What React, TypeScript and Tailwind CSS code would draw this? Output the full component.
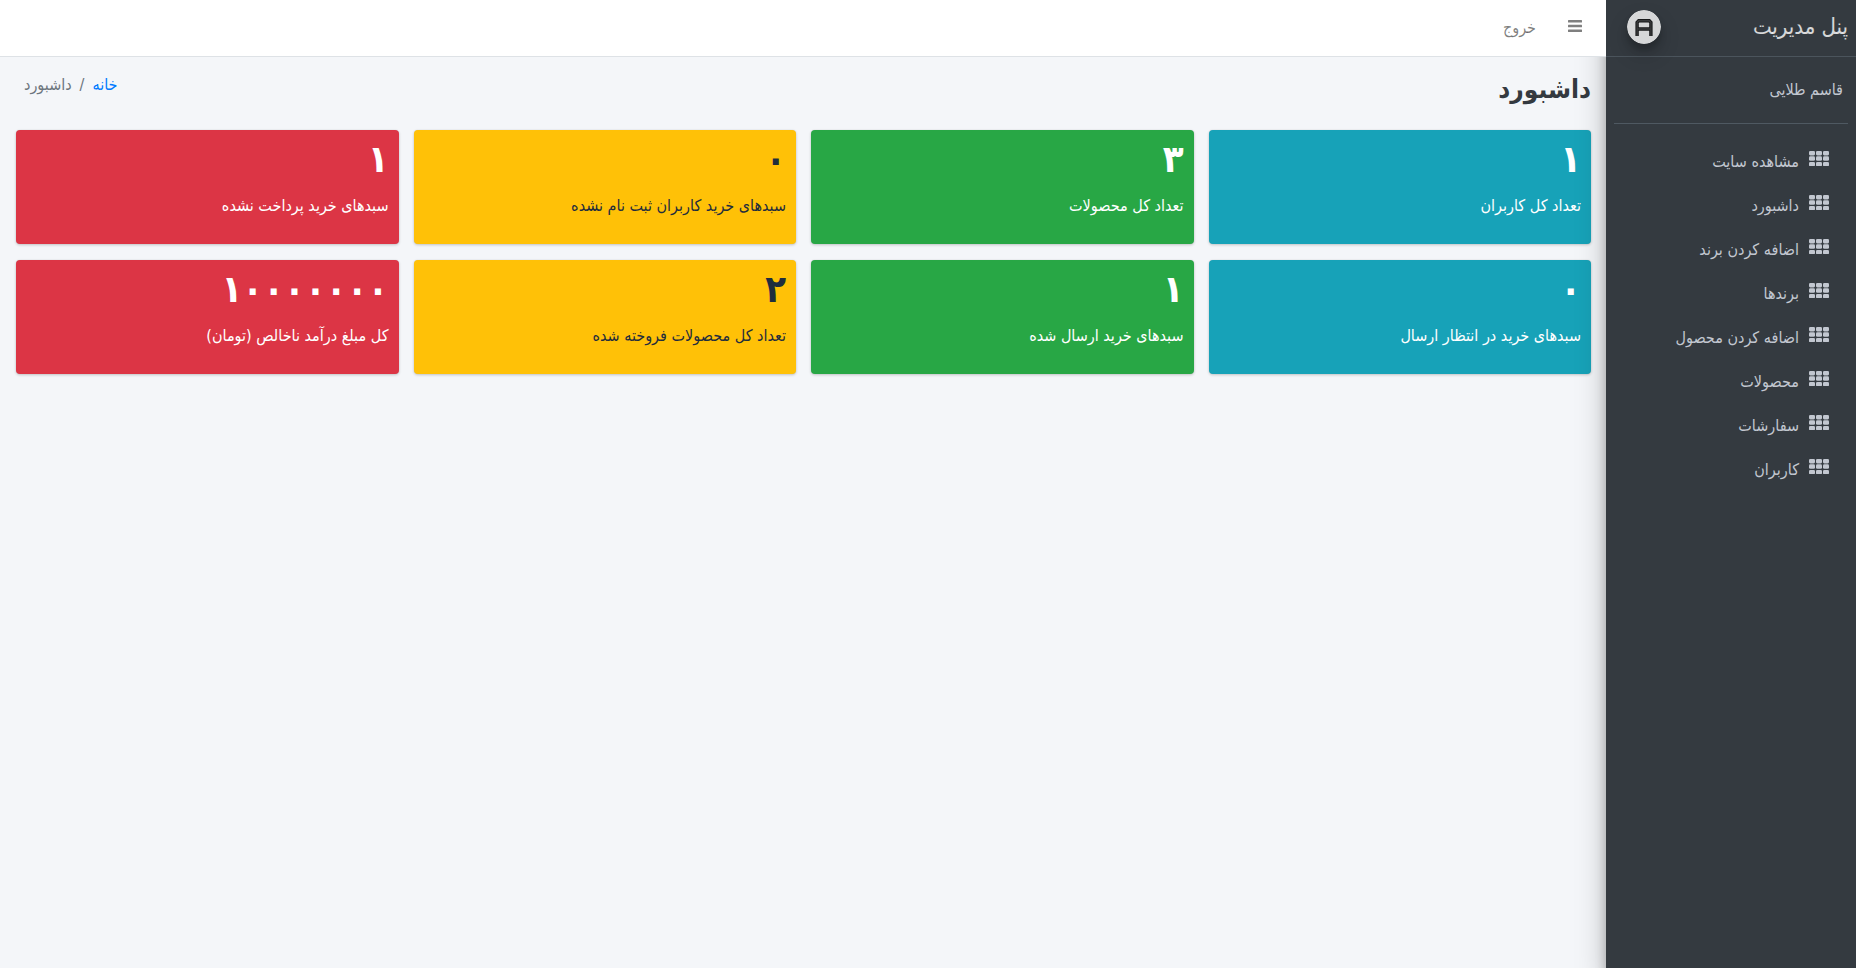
import React from 'react';

const navItems = [
  'مشاهده سایت',
  'داشبورد',
  'اضافه کردن برند',
  'برندها',
  'اضافه کردن محصول',
  'محصولات',
  'سفارشات',
  'کاربران',
];

const tones = {
  info: 'bg-[#17a2b8] text-white',
  success: 'bg-[#28a745] text-white',
  warning: 'bg-[#ffc107] text-[#1f2d3d]',
  danger: 'bg-[#dc3545] text-white',
};

type Stat = { value: string; label: string; tone: keyof typeof tones };

const stats: Stat[] = [
  { value: '۱', label: 'تعداد کل کاربران', tone: 'info' },
  { value: '۳', label: 'تعداد کل محصولات', tone: 'success' },
  { value: '۰', label: 'سبدهای خرید کاربران ثبت نام نشده', tone: 'warning' },
  { value: '۱', label: 'سبدهای خرید پرداخت نشده', tone: 'danger' },
  { value: '۰', label: 'سبدهای خرید در انتظار ارسال', tone: 'info' },
  { value: '۱', label: 'سبدهای خرید ارسال شده', tone: 'success' },
  { value: '۲', label: 'تعداد کل محصولات فروخته شده', tone: 'warning' },
  { value: '۱۰۰۰۰۰۰۰', label: 'کل مبلغ درآمد ناخالص (تومان)', tone: 'danger' },
];

function GridIcon() {
  const cols = [0, 7, 14];
  const rows = [0, 5.3, 10.9];
  return (
    <svg viewBox="0 0 20 15" className="h-[15px] w-5 shrink-0" fill="currentColor" aria-hidden="true">
      {rows.map((y) =>
        cols.map((x) => <rect key={`${x}-${y}`} x={x} y={y} width="6" height="4.4" rx="1.3" />),
      )}
    </svg>
  );
}

function BarsIcon() {
  return (
    <svg viewBox="0 0 14 12" className="h-3 w-3.5" fill="currentColor" aria-hidden="true">
      <rect x="0" y="0" width="14" height="2.5" rx="0.5" />
      <rect x="0" y="4.7" width="14" height="2.5" rx="0.5" />
      <rect x="0" y="9.4" width="14" height="2.5" rx="0.5" />
    </svg>
  );
}

function BrandLogo() {
  const mark = 'M10.1 26V12.4l1.6-1.6h10.6l1.6 1.6V26M10.1 19h13.8';
  return (
    <svg
      viewBox="0 0 34 34"
      className="size-[34px] rounded-full opacity-80 shadow-[0_10px_20px_rgba(0,0,0,0.19),0_6px_6px_rgba(0,0,0,0.23)]"
      aria-hidden="true"
    >
      <circle cx="17" cy="17" r="17" fill="#fff" />
      <path d={mark} fill="none" stroke="#111" strokeWidth="3.4" />
      <path d={mark} fill="none" stroke="#3a3a3a" strokeWidth="1.4" />
    </svg>
  );
}

function Sidebar() {
  return (
    <aside className="z-10 flex w-[250px] shrink-0 flex-col bg-[#343a40] text-[#c2c7d0] shadow-[0_14px_28px_rgba(0,0,0,0.25),0_10px_10px_rgba(0,0,0,0.22)]">
      <a href="#" className="flex h-[57px] items-center justify-between border-b border-[#4b545c] pr-2 pl-[21px] text-[22px] font-light text-white/80">
        <span className="pb-1">پنل مدیریت</span>
        <span className="pb-0.5">
          <BrandLogo />
        </span>
      </a>
      <div className="mx-2 flex h-[67px] items-center border-b border-[#4f5962] px-[5px]">
        <a href="#" className="text-base">قاسم طلایی</a>
      </div>
      <nav className="mt-4 px-2">
        <ul>
          {navItems.map((item) => (
            <li key={item}>
              <a href="#" className="flex h-11 items-center gap-2.5 pr-[19px] text-base">
                <span className="pb-2">
                  <GridIcon />
                </span>
                <span>{item}</span>
              </a>
            </li>
          ))}
        </ul>
      </nav>
    </aside>
  );
}

function StatCard({ value, label, tone }: Stat) {
  return (
    <section className={`h-[114px] rounded-sm px-2.5 pt-2 shadow-[0_0_1px_rgba(0,0,0,0.125),0_1px_3px_rgba(0,0,0,0.2)] ${tones[tone]}`}>
      <h3 className="mb-3.5 text-[38px] leading-[42px] font-bold whitespace-nowrap">{value}</h3>
      <p className="text-base leading-6">{label}</p>
    </section>
  );
}

export default function App() {
  return (
    <div
      dir="rtl"
      className="flex min-h-screen bg-[#f4f6f9] font-['DejaVu_Sans_Condensed','DejaVu_Sans',sans-serif] text-[#212529]"
    >
      <Sidebar />
      <div className="min-w-0 flex-1">
        <header className="relative z-20 flex h-[57px] items-center gap-8 border-b border-[#dee2e6] bg-white pr-6 text-black/50">
          <button type="button" aria-label="منو" className="pb-1">
            <BarsIcon />
          </button>
          <a href="#" className="text-base">خروج</a>
        </header>
        <main className="pr-[15px] pl-4">
          <div className="flex h-[73px] items-start justify-between">
            <h1 className="pt-3 text-[26px] leading-10 font-bold text-[#343a40]">داشبورد</h1>
            <nav className="flex gap-2 pt-4 pl-2 text-base leading-6 text-[#6c757d]">
              <a href="#" className="text-[#007bff]">خانه</a>
              <span>/</span>
              <span>داشبورد</span>
            </nav>
          </div>
          <div className="grid grid-cols-4 gap-x-[15px] gap-y-4">
            {stats.map((stat) => (
              <StatCard key={stat.label} {...stat} />
            ))}
          </div>
        </main>
      </div>
    </div>
  );
}
